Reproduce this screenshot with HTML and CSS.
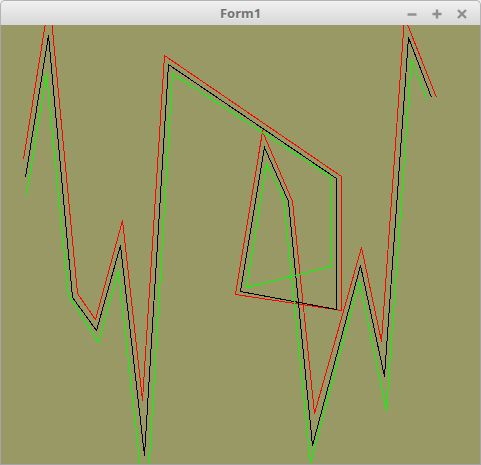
FILE: index.html
```html
<!DOCTYPE html>
<html>
<head>
<meta charset="utf-8">
<link rel="stylesheet" href="styles.css">
</head>
<body>
<div class="window">
  <div class="titlebar">
    <div class="spacer"></div>
    <div class="title">Form1</div>
    <div class="buttons">
      <svg class="btn" width="12" height="12" viewBox="0 0 12 12"><path d="M1.5 6.5H10.5"/></svg>
      <svg class="btn" width="12" height="12" viewBox="0 0 12 12"><path d="M1.5 6H10.5M6 1.5V10.5"/></svg>
      <svg class="btn" width="12" height="12" viewBox="0 0 12 12"><path d="M2 2L10 10M10 2L2 10"/></svg>
    </div>
  </div>
  <div class="canvas">
    <svg class="plot" width="479" height="439" viewBox="1 25 479 439">
      <polyline class="red" points="23.5,159.5 49.5,-2 77.5,293.5 95.5,319.5 122.5,220.5 142.5,400.5 164.5,55.5 341.5,176.5 341.5,310.5 235.5,294.5 262.5,131.5 292.5,201.5 314.5,413.5 361.5,247.5 381.5,341.5 404.5,17 436.5,97.5"/>
      <polyline class="black" points="25.5,177.5 48.5,35.5 72.5,297.5 96.5,330.5 120.5,245.5 144.5,455.5 168.5,64.5 336.5,178.5 336.5,309.5 240.5,291.5 264.5,147.5 288.5,201.5 312.5,445.5 360.5,265.5 384.5,376.5 408.5,37.5 431.5,97.5"/>
      <polyline class="green" points="26.5,195.5 46.5,73.5 68.5,295.5 98.5,342.5 118.5,270.5 146,518 172.5,73.5 331.5,177.5 331.5,266.5 246.5,287.5 266.5,164.5 283.5,197.5 310.5,462.5 359.5,281.5 386.5,410.5 411.5,59.5 427.5,99.5"/>
    </svg>
  </div>
</div>
</body>
</html>
```

FILE: styles.css
```css
html, body {
  margin: 0;
  padding: 0;
  background: #f2f2f2;
}

.window {
  width: 481px;
  height: 465px;
  display: flex;
  flex-direction: column;
  overflow: hidden;
}

.titlebar {
  height: 25px;
  flex: 0 0 25px;
  box-sizing: border-box;
  border: 1px solid #b4b4b4;
  border-bottom: none;
  border-radius: 5px 5px 0 0;
  background: linear-gradient(#f1f1f1, #d7d7d7);
  display: grid;
  grid-template-columns: 1fr auto 1fr;
  align-items: center;
}

.title {
  font-family: "Noto Sans", "DejaVu Sans", sans-serif;
  font-weight: bold;
  font-size: 13px;
  color: #737373;
  line-height: 23px;
  text-shadow: 0 1px 0 rgba(255, 255, 255, 0.6);
}

.buttons {
  display: flex;
  justify-content: flex-end;
  gap: 13px;
  padding-right: 12px;
  padding-top: 1px;
}

.btn {
  display: block;
  fill: none;
  stroke: #8e8e8e;
  stroke-width: 2.4;
}

.canvas {
  flex: 1;
  display: flex;
  background: #999966;
  border: 1px solid #a5a5a5;
  border-top: none;
}

.plot {
  display: block;
}

.plot polyline {
  fill: none;
  stroke-width: 1;
  shape-rendering: crispEdges;
  stroke-linejoin: miter;
}

.red { stroke: #ff0000; }
.black { stroke: #000000; }
.green { stroke: #00ff00; }
```
